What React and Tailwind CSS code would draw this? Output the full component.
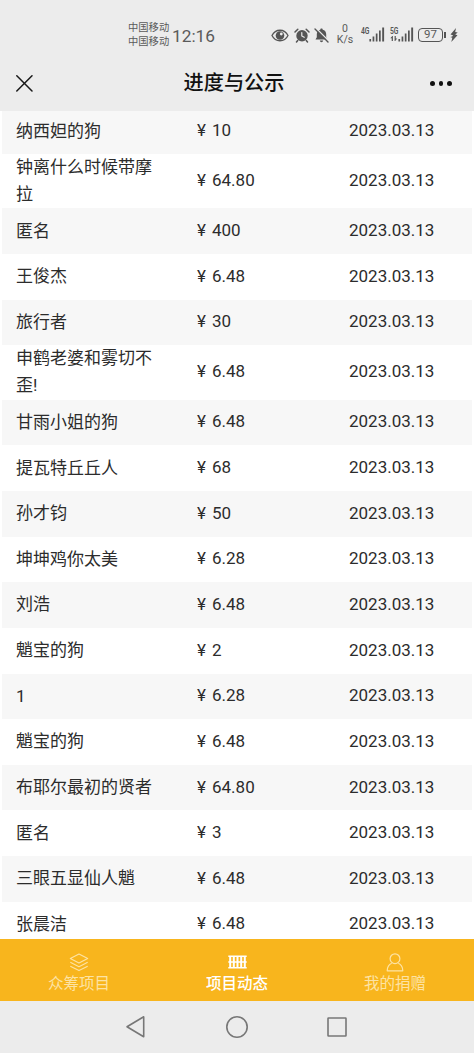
const donations = [
  { name: '纳西妲的狗', amount: '10' },
  { name: '钟离什么时候带摩拉', amount: '64.80' },
  { name: '匿名', amount: '400' },
  { name: '王俊杰', amount: '6.48' },
  { name: '旅行者', amount: '30' },
  { name: '申鹤老婆和雾切不歪!', amount: '6.48' },
  { name: '甘雨小姐的狗', amount: '6.48' },
  { name: '提瓦特丘丘人', amount: '68' },
  { name: '孙才钧', amount: '50' },
  { name: '坤坤鸡你太美', amount: '6.28' },
  { name: '刘浩', amount: '6.48' },
  { name: '魈宝的狗', amount: '2' },
  { name: '1', amount: '6.28' },
  { name: '魈宝的狗', amount: '6.48' },
  { name: '布耶尔最初的贤者', amount: '64.80' },
  { name: '匿名', amount: '3' },
  { name: '三眼五显仙人魈', amount: '6.48' },
  { name: '张晨洁', amount: '6.48' },
];

function Signal({ label, data }) {
  return (
    <svg className="overflow-visible" width="25" height="18" viewBox="0 0 25 18" fill="#555">
      <text x="0" y="6.5" fontSize="9" fontWeight="600" textLength="8.5" lengthAdjust="spacingAndGlyphs">{label}</text>
      {data && <path d="M2.3 9 0.3 11.3h1.4V14h1.2V9zM5.2 14l2-2.4H5.8V9H4.6v5z" />}
      <rect x="8.4" y="12" width="1.7" height="2.5" />
      <rect x="11.6" y="9.5" width="1.7" height="5" />
      <rect x="14.8" y="6.5" width="1.7" height="8" />
      <rect x="18" y="3.5" width="1.7" height="11" />
      <rect x="21.2" y="0.5" width="1.9" height="14" />
    </svg>
  );
}

function StatusBar() {
  return (
    <div className="h-[56px] flex items-start text-[#5a5a5a]">
      <div className="ml-[128px] mt-[21px] w-[44px] text-[10.3px] leading-[14px] whitespace-nowrap">
        <div>中国移动</div>
        <div>中国移动</div>
      </div>
      <div className="mt-[23.500px] w-[99px] text-[17.300px] leading-6">12:16</div>
      <div className="mt-[26px] flex items-center h-[18px]">
        <svg width="18" height="13" viewBox="0 0 18 13" fill="none" stroke="#555" strokeWidth="1.3">
          <path d="M1 6.5C4.5-.5 13.500-.5 17 6.500 13.500 13.500 4.500 13.500 1 6.500z" />
          <circle cx="9" cy="6.500" r="4.300" fill="#555" stroke="none" />
          <circle cx="10.300" cy="5" r="1.400" fill="#ececec" stroke="none" />
        </svg>
        <svg className="ml-[5px]" width="16" height="15" viewBox="0 0 16 15" fill="none" stroke="#555" strokeWidth="1.5" strokeLinecap="round">
          <circle cx="8" cy="7.700" r="5.700" fill="#555" stroke="none" />
          <path d="M1 4 3.800 1.200M15 4 12.200 1.200M3.700 12.500l-1.200 1.500M12.300 12.500l1.200 1.500" />
          <path d="M7.800 4.500v3.500l2.400 1.300" stroke="#ececec" strokeWidth="1.200" />
        </svg>
        <svg className="ml-[4px]" width="15" height="15" viewBox="0 0 15 15">
          <path d="M7.500.5c.8 0 1.200.5 1.200 1.200 2.200.5 3.500 2.200 3.500 4.500v3l1.300 2.300H1.500l1.300-2.300v-3c0-2.300 1.300-4 3.500-4.500 0-.7.400-1.200 1.200-1.200zM5.800 12.500h3.400c-.3 1.200-.9 1.700-1.700 1.700s-1.400-.5-1.700-1.700z" fill="#555" />
          <path d="M2 .2 15 13.200" stroke="#ececec" strokeWidth="1.400" />
          <path d="M1 1 14 14" stroke="#555" strokeWidth="1.400" strokeLinecap="round" />
        </svg>
      </div>
      <div className="ml-[6px] mt-[24px] w-[20px] text-center text-[10.500px] leading-none">
        <div className="h-[11px]">0</div>
        <div className="h-[11px]">K/s</div>
      </div>
      <div className="ml-[6px] mt-[27px] flex">
        <Signal label="4G" />
        <div className="ml-[4px]">
          <Signal label="5G" data />
        </div>
      </div>
      <div className="ml-[3px] mt-[28px] w-[25px] h-[14px] rounded-[4px] border-[1.5px] border-[#555] flex items-center justify-center text-[11.500px] leading-none">
        97
      </div>
      <div className="ml-[1px] mt-[32px] w-[2px] h-[6px] bg-[#555]" />
      <svg className="ml-[4px] mt-[28px]" width="8" height="14" viewBox="0 0 8 14" fill="#555">
        <path d="M6 0 .5 6.500l2.500.7-.8 1.300L.3 9l2 .8L1.300 14 7.500 7.200 5.200 6.500 7.700 4.600 5.200 4z" />
      </svg>
    </div>
  );
}

function TitleBar() {
  return (
    <div className="h-[55px] grid grid-cols-3 items-center pl-4 pr-[22px]">
      <svg width="17" height="17" viewBox="0 0 17 17" stroke="#181818" strokeWidth="1.500" strokeLinecap="round">
        <path d="M.8.8 16 16M16 .8.8 16" />
      </svg>
      <h1 className="text-[20.200px] leading-none font-medium text-[#111] text-center whitespace-nowrap">进度与公示</h1>
      <div className="flex justify-end gap-[4px]">
        <span className="size-[4.500px] rounded-full bg-[#111]" />
        <span className="size-[4.500px] rounded-full bg-[#111]" />
        <span className="size-[4.500px] rounded-full bg-[#111]" />
      </div>
    </div>
  );
}

function DonationRow({ name, amount }) {
  return (
    <div className="shrink-0 min-h-[45.650px] flex items-center odd:bg-[#f7f7f7] text-[17px] leading-[27.200px] text-[#2c2c2c]">
      <div className="ml-[14px] w-[140px] break-all">{name}</div>
      <div className="relative -top-[0.500px] ml-[41px] w-[152px] flex">
        <span className="w-[15px]">¥</span>
        <span>{amount}</span>
      </div>
      <div className="relative -top-[0.500px]">2023.03.13</div>
    </div>
  );
}

function TabBar() {
  return (
    <div className="h-[62.500px] shrink-0 grid grid-cols-3 bg-[#f8b51d] text-[#fde3a4] text-[15.500px] leading-[20px]">
      <div className="flex flex-col items-center pt-[14px]">
        <svg width="20" height="19" viewBox="0 0 20 19" fill="none" stroke="currentColor" strokeWidth="1.100" strokeLinejoin="round">
          <path d="M10 1 18.700 5.500 10 10 1.300 5.500zM1.300 9.300 10 13.700l8.700-4.400M1.300 13.200 10 17.600l8.700-4.400" />
        </svg>
        <span className="mt-[2px]">众筹项目</span>
      </div>
      <div className="flex flex-col items-center pt-[14px] text-white font-medium">
        <svg width="19" height="19" viewBox="0 0 19 19" fill="none" stroke="currentColor">
          <path d="M.3 3.200h18.400M.3 9h18.400M.3 14.800h18.400" strokeWidth="1.500" />
          <path d="M2.200 3.200v11.600M5.800 3.200v11.600M9.500 3.200v11.600M13.200 3.200v11.600M16.800 3.200v11.600" strokeWidth="2" />
        </svg>
        <span className="mt-[2px]">项目动态</span>
      </div>
      <div className="flex flex-col items-center pt-[14px]">
        <svg width="18" height="19" viewBox="0 0 18 19" fill="none" stroke="currentColor" strokeWidth="1.200" strokeLinejoin="round">
          <circle cx="9" cy="5.700" r="4.900" />
          <path d="M5.700 10.300C3 11.500 1.300 14 1.200 17.800h15.600c-.1-3.800-1.800-6.300-4.500-7.500" />
        </svg>
        <span className="mt-[2px]">我的捐赠</span>
      </div>
    </div>
  );
}

function SystemNav() {
  return (
    <div className="h-[52px] shrink-0 bg-[#ececec] flex items-start pt-[14px]">
      <svg className="ml-[125px]" width="21" height="24" viewBox="0 0 21 24" fill="none" stroke="#777" strokeWidth="1.600" strokeLinejoin="round">
        <path d="M18.700 1.800v20L2 11.800z" />
      </svg>
      <svg className="ml-[79px]" width="24" height="24" viewBox="0 0 24 24" fill="none" stroke="#777" strokeWidth="1.600">
        <circle cx="12" cy="12" r="10.200" />
      </svg>
      <svg className="ml-[78px]" width="22" height="24" viewBox="0 0 22 24" fill="none" stroke="#777" strokeWidth="1.600" strokeLinejoin="round">
        <rect x="1" y="3" width="18" height="18" rx="0.500" />
      </svg>
    </div>
  );
}

export default function App() {
  return (
    <div className="w-full h-[1053px] flex flex-col overflow-hidden bg-white font-[Roboto,'Noto_Sans_CJK_SC',sans-serif]">
      <header className="shrink-0 bg-[#ececec]">
        <StatusBar />
        <TitleBar />
      </header>
      {/* list is scrolled slightly, so the first row tucks under the header */}
      <main className="flex-1 min-h-0 overflow-hidden px-[2px]">
        <div className="flex flex-col -mt-[2.700px]">
          {donations.map((d, i) => (
            <DonationRow key={i} name={d.name} amount={d.amount} />
          ))}
        </div>
      </main>
      <TabBar />
      <SystemNav />
    </div>
  );
}
